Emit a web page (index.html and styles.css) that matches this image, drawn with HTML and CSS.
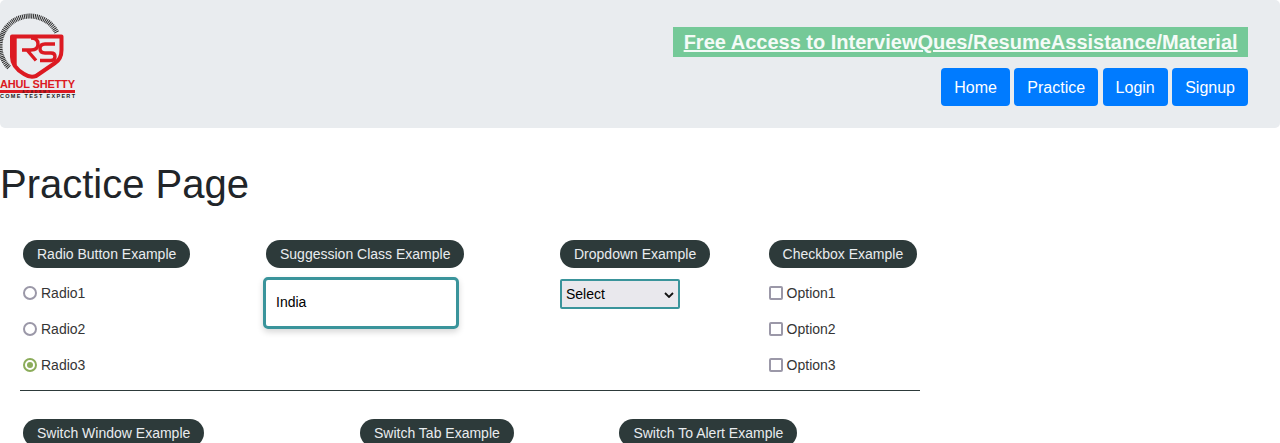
FILE: index.html
```html
<!DOCTYPE html>
<html lang="en">
<head>
<meta charset="utf-8">
<title>Practice Page</title>
<link rel="stylesheet" href="styles.css">
</head>
<body>
<header class="banner">
  <svg class="logo" width="76" height="86" viewBox="0 0 76 86" aria-label="Rahul Shetty Academy">
    <path class="logo-ring" d="M9 54.500 A30 30 0 1 1 57 20"/>
    <path class="logo-shield" d="M12 23.500 H61.500 V37 Q61.500 46 55 50 L36 63 Q30 65 24 61 Q12 54 12 44 Z"/>
    <path class="logo-mark" d="M15 24 V52"/>
    <path class="logo-mark" d="M22 37 H31 Q38 37 38 31 Q38 25 31 25 M27 37 L36 47.500"/>
    <path class="logo-mark" d="M55 31 H45 Q40 31 40 35.500 Q40 40 45 40 H51 Q55 40 55 43.500 Q55 47.500 51 47.500 H40"/>
    <text class="logo-name" x="0" y="75" textLength="75" lengthAdjust="spacing">AHUL SHETTY</text>
    <rect class="logo-bar" x="0" y="77" width="75" height="3"/>
    <text class="logo-sub" x="22" y="79.800" textLength="28" lengthAdjust="spacing">ACADEMY</text>
    <text class="logo-tag" x="0" y="84.500" textLength="75" lengthAdjust="spacing">COME TEST EXPERT</text>
  </svg>
  <div class="banner-side">
    <a class="promo" href="#">Free Access to InterviewQues/ResumeAssistance/Material</a>
    <nav class="nav">
      <a class="nav-btn" href="#">Home</a>
      <a class="nav-btn" href="#">Practice</a>
      <a class="nav-btn" href="#">Login</a>
      <a class="nav-btn" href="#">Signup</a>
    </nav>
  </div>
</header>
<h1 class="title">Practice Page</h1>
<main class="sheet">
  <section class="row row-top">
    <div class="group group-radio">
      <span class="pill">Radio Button Example</span>
      <label class="opt"><span class="radio"></span>Radio1</label>
      <label class="opt"><span class="radio"></span>Radio2</label>
      <label class="opt"><span class="radio radio-on"></span>Radio3</label>
    </div>
    <div class="group group-suggest">
      <span class="pill">Suggession Class Example</span>
      <div class="field">India</div>
    </div>
    <div class="group group-drop">
      <span class="pill">Dropdown Example</span>
      <div class="select">Select
        <svg class="chev" width="10" height="6" viewBox="0 0 10 6"><path d="M1 1 L5 5 L9 1"/></svg>
      </div>
    </div>
    <div class="group">
      <span class="pill">Checkbox Example</span>
      <label class="opt"><span class="check"></span>Option1</label>
      <label class="opt"><span class="check"></span>Option2</label>
      <label class="opt"><span class="check"></span>Option3</label>
    </div>
  </section>
  <section class="row row-next">
    <div class="group group-window"><span class="pill">Switch Window Example</span></div>
    <div class="group group-tab"><span class="pill">Switch Tab Example</span></div>
    <div class="group"><span class="pill">Switch To Alert Example</span></div>
  </section>
</main>
</body>
</html>
```
FILE: styles.css
```css
* { box-sizing: border-box; }
html, body { margin: 0; height: 100%; overflow: hidden; }
body { font-family: "Liberation Sans", Arial, sans-serif; color: #212529; background: #fff; font-size: 14px; }

.banner {
  height: 128px;
  background: #e9ecef;
  border-radius: 5px;
  display: flex;
  justify-content: space-between;
  padding: 13px 32px 0 0;
}
.logo { display: block; }
.logo-ring { fill: none; stroke: #2a2a2a; stroke-width: 5; stroke-dasharray: 1 .8; }
.logo-shield { fill: none; stroke: #dc1a22; stroke-width: 4; stroke-linejoin: round; }
.logo-mark { fill: none; stroke: #dc1a22; stroke-width: 3.400; }
.logo-name { fill: #dc1a22; font-size: 11px; font-weight: 700; }
.logo-bar { fill: #dc1a22; }
.logo-sub { fill: #5a1418; font-size: 3.500px; font-weight: 700; }
.logo-tag { fill: #222; font-size: 5.500px; font-weight: 700; }

.banner-side { display: flex; flex-direction: column; align-items: flex-end; padding-top: 14px; }
.promo {
  background: #75c998;
  color: #f4fbf7;
  font-size: 20px;
  font-weight: 700;
  line-height: 30px;
  padding: 0 10.400px;
  text-decoration: underline;
}
.nav { display: flex; gap: 4.450px; margin-top: 11px; }
.nav-btn {
  display: block;
  height: 38px;
  padding: 0 13px;
  line-height: 39px;
  font-size: 16px;
  color: #fff;
  background: #007bff;
  border-radius: 4px;
  text-decoration: none;
}

.title { margin: 32px 0 0; font-size: 40px; font-weight: 400; line-height: 48px; }

.sheet { width: 900px; margin-left: 20px; padding-top: 32px; }
.row { display: flex; padding-left: 3px; }
.row-top { height: 151px; border-bottom: 1px solid #2d3a3a; }
.row-next { padding-top: 28px; }
.group { display: flex; flex-direction: column; align-items: flex-start; }
.group-radio { width: 243px; }
.group-suggest { width: 294px; }
.group-drop { width: 208.600px; }
.group-window { width: 337px; }
.group-tab { width: 259.400px; }

.pill {
  display: block;
  height: 28px;
  line-height: 28px;
  padding: 0 14px;
  border-radius: 14px;
  background: #2d3a3a;
  color: #e9ecef;
  font-size: 14px;
  white-space: nowrap;
}
.opt { display: flex; align-items: center; height: 36px; gap: 4px; font-size: 14px; color: #353535; }
.opt:first-of-type { margin-top: 7px; }
.radio, .check {
  width: 14px;
  height: 14px;
  border: 2px solid #9b98a8;
  background: #fff;
  flex: none;
}
.radio { border-radius: 50%; }
.radio-on { border-color: #8bac5a; position: relative; }
.radio-on::after {
  content: "";
  position: absolute;
  inset: 2px;
  border-radius: 50%;
  background: #8bac5a;
}
.check { border-radius: 2px; }

.field {
  width: 196px;
  height: 52px;
  margin: 9px 0 0 -3px;
  padding: 0 10px;
  line-height: 44px;
  border: 3px solid #3a949b;
  border-radius: 5px;
  box-shadow: 0 3px 6px rgba(0, 0, 0, .16);
  font-size: 14px;
  color: #000;
}
.select {
  width: 120px;
  height: 30px;
  margin-top: 11px;
  padding: 0 5px 0 4px;
  display: flex;
  align-items: center;
  justify-content: space-between;
  background: #e9e8ed;
  border: 2px solid #3a949b;
  border-radius: 2px;
  font-size: 14px;
  color: #000;
}
.chev { fill: none; stroke: #111; stroke-width: 1.800; margin: 1px -1px 0 0; }
```
